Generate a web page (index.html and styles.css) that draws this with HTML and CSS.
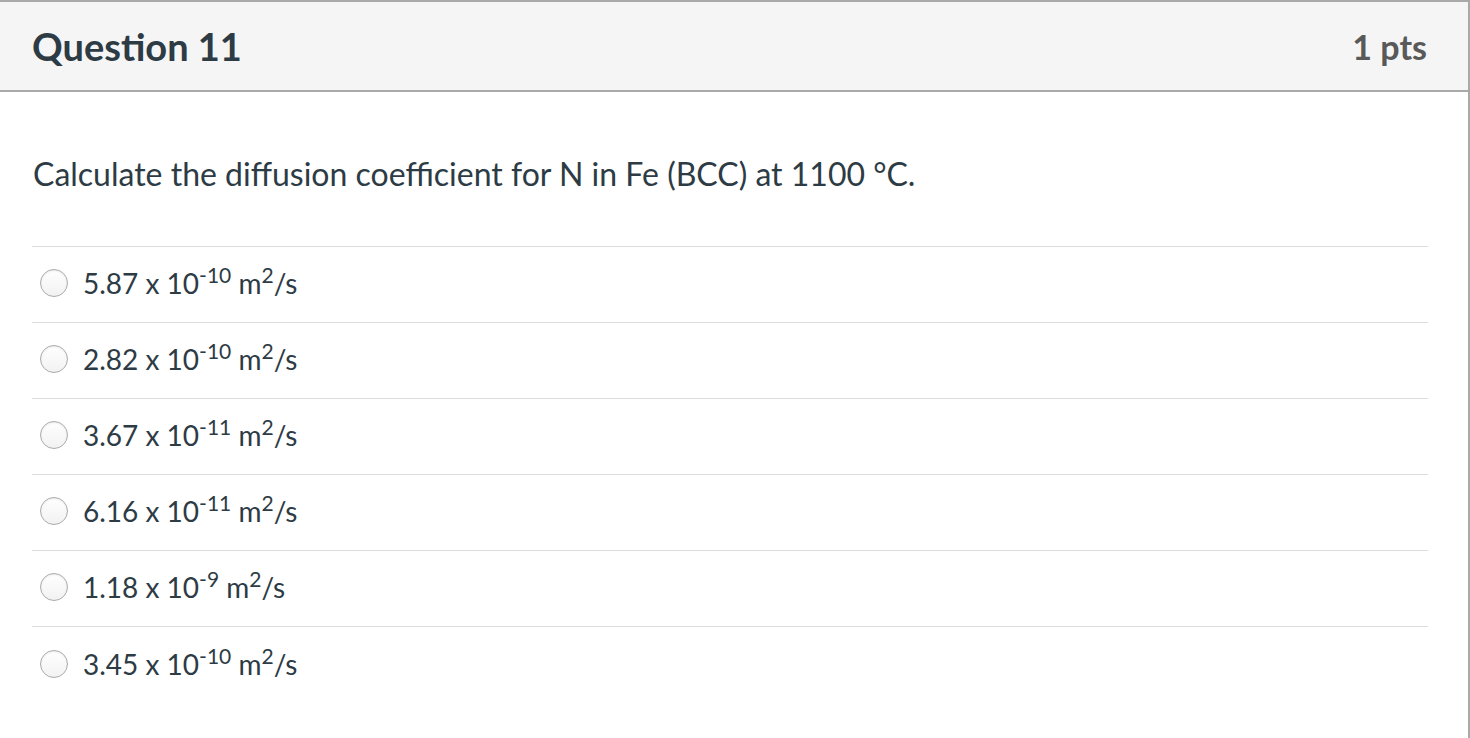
FILE: index.html
```html
<!DOCTYPE html>
<html lang="en">
<head>
<meta charset="utf-8">
<title>Question 11</title>
<link rel="stylesheet" href="styles.css">
</head>
<body>
<div class="card">
  <div class="header">
    <h2 class="title">Question 11</h2>
    <div class="points">1 pts</div>
  </div>
  <div class="content">
    <p class="question">Calculate the diffusion coefficient for N in Fe (BCC) at 1100 °C.</p>
    <div class="answers">
      <label class="answer"><span class="radio"></span><span class="label">5.87 x 10<sup>-10</sup> m<sup>2</sup>/s</span></label>
      <label class="answer"><span class="radio"></span><span class="label">2.82 x 10<sup>-10</sup> m<sup>2</sup>/s</span></label>
      <label class="answer"><span class="radio"></span><span class="label">3.67 x 10<sup>-11</sup> m<sup>2</sup>/s</span></label>
      <label class="answer"><span class="radio"></span><span class="label">6.16 x 10<sup>-11</sup> m<sup>2</sup>/s</span></label>
      <label class="answer"><span class="radio"></span><span class="label">1.18 x 10<sup>-9</sup> m<sup>2</sup>/s</span></label>
      <label class="answer"><span class="radio"></span><span class="label">3.45 x 10<sup>-10</sup> m<sup>2</sup>/s</span></label>
    </div>
  </div>
</div>
</body>
</html>
```
FILE: styles.css
```css
* { box-sizing: border-box; }
html, body {
  margin: 0;
  padding: 0;
  background: #fff;
}
body {
  font-family: Lato, "Noto Sans", sans-serif;
  color: #2d3b45;
}
.card {
  height: 738px;
  border-top: 2px solid #a9a9a9;
  border-right: 2px solid #a9a9a9;
}
.header {
  height: 90px;
  background: #f5f5f5;
  border-bottom: 2px solid #a9a9a9;
  display: flex;
  align-items: center;
  justify-content: space-between;
  padding: 0 41px 0 32px;
}
.title {
  margin: 0;
  font-size: 38px;
  font-weight: 700;
  color: #2d3b45;
}
.points {
  font-size: 34px;
  font-weight: 700;
  color: #595959;
}
.content {
  padding: 0 40px 0 32px;
}
.question {
  margin: 0;
  padding: 60px 0 50px 1px;
  font-size: 32px;
  line-height: 44px;
}
.answers {
  border-top: 1px solid #dcdcdc;
}
.answer {
  display: flex;
  align-items: center;
  height: 76px;
  border-bottom: 1px solid #dcdcdc;
  padding-left: 8px;
  padding-bottom: 3px;
}
.answer:last-child {
  border-bottom: none;
}
.radio {
  flex: none;
  width: 28px;
  height: 28px;
  border-radius: 50%;
  border: 1px solid #ababab;
  background: linear-gradient(#ffffff, #f2f2f2);
  box-shadow: inset 0 1px 2px rgba(0,0,0,0.08);
  margin-right: 15px;
}
.label {
  font-size: 28px;
  line-height: 40px;
}
.label sup {
  font-size: 21px;
  line-height: 0;
  vertical-align: 11px;
}
```
